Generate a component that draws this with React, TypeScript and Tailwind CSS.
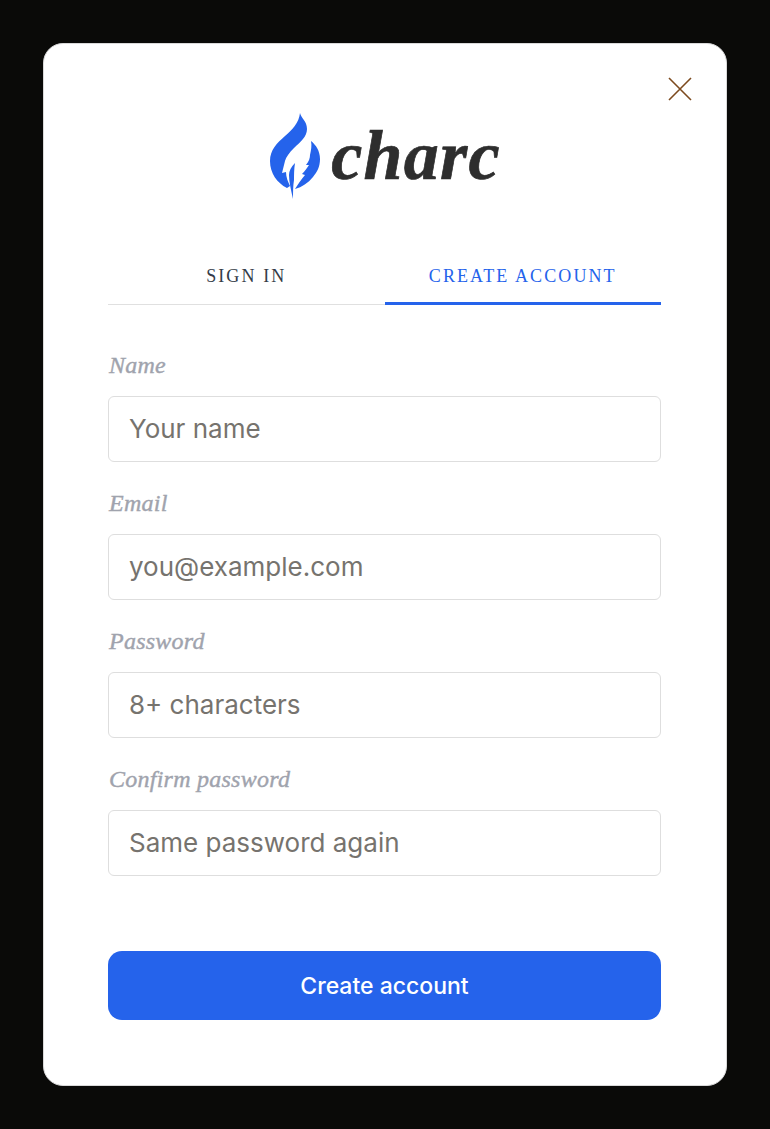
const fields = [
  { label: 'Name', placeholder: 'Your name', type: 'text' },
  { label: 'Email', placeholder: 'you@example.com', type: 'email' },
  { label: 'Password', placeholder: '8+ characters', type: 'text' },
  { label: 'Confirm password', placeholder: 'Same password again', type: 'text' },
];

function Logo() {
  return (
    <svg width="50" height="88" viewBox="0 0 50 88" className="shrink-0" fill="#2563eb">
      <path d="M30 1C31 6 37 9 37 17C37 25 30 30 24 36C19 41 16 45 15 49C14 53 13 57 12 61L16 60C16 65 18 70 20 74L17 76C7 71 0 61 0 49C0 38 7 31 15 24C22 18 29 11 30 1Z" />
      <path d="M25 51C21 55 19 59 19 63C19 70 21 78 23 87C23 80 23 74 24 68C24 63 24 57 25 51Z" />
      <path d="M41 29C46 33 50 39 50 47C50 55 47 60 43 65C38 71 32 75 25 77C28 72 31 68 35 63L32 62C35 59 37 56 39 53L36 53C39 49 40 46 40 43C41 38 42 34 41 29Z" />
    </svg>
  );
}

export default function App() {
  return (
    <div className="flex h-[1129px] items-start justify-center overflow-hidden bg-[#0a0a08] pt-[43px]">
      <div className="relative h-[1043px] w-[684px] rounded-[20px] border border-[#d9d9d9] bg-white pr-[65px] pl-[64px] pt-[68px]">
        <button className="absolute right-[33px] top-[32px] text-[#7c4a1e]" aria-label="Close">
          <svg width="26" height="26" viewBox="0 0 26 26" fill="none" stroke="currentColor" strokeWidth="1.6">
            <path d="M2 2L24 24M24 2L2 24" />
          </svg>
        </button>

        <div className="flex h-[88px] items-center justify-center gap-[11px] pl-[2px]">
          <Logo />
          <span className="font-['Liberation_Serif',serif] text-[70px] leading-none font-bold italic tracking-[1.2px] text-[#2e2e2e] [-webkit-text-stroke:0.7px_#2e2e2e]">
            charc
          </span>
        </div>

        <div className="mt-[64px] flex border-b border-[#e0e0e0] font-['Liberation_Serif',serif] text-[18px] tracking-[2.1px]">
          <div className="h-[40px] flex-1 text-center leading-[24px] text-[#333b47]">SIGN IN</div>
          <div className="-mb-px h-[41px] flex-1 border-b-[3px] border-[#2563eb] text-center leading-[24px] text-[#2563eb]">
            CREATE ACCOUNT
          </div>
        </div>

        <form className="mt-[44px] flex flex-col gap-[25.4px]">
          {fields.map((field) => (
            <label key={field.label} className="block">
              <span className="block h-[30px] pl-px font-['Liberation_Serif',serif] text-[24px] leading-[32px] italic tracking-[0.25px] text-[#a0a3ad] [-webkit-text-stroke:0.4px_#a0a3ad]">
                {field.label}
              </span>
              <input
                type={field.type}
                placeholder={field.placeholder}
                className="mt-[17px] block h-[65.6px] w-full rounded-[6px] border border-[#dedede] bg-white px-[20px] font-['Inter',sans-serif] text-[26px] text-[#333] placeholder:text-[#76736e]"
              />
            </label>
          ))}
        </form>

        <button className="mt-[75px] block h-[69px] w-full rounded-[14px] bg-[#2563eb] pt-[2px] font-['Inter',sans-serif] text-[23px] font-medium text-white">
          Create account
        </button>
      </div>
    </div>
  );
}
